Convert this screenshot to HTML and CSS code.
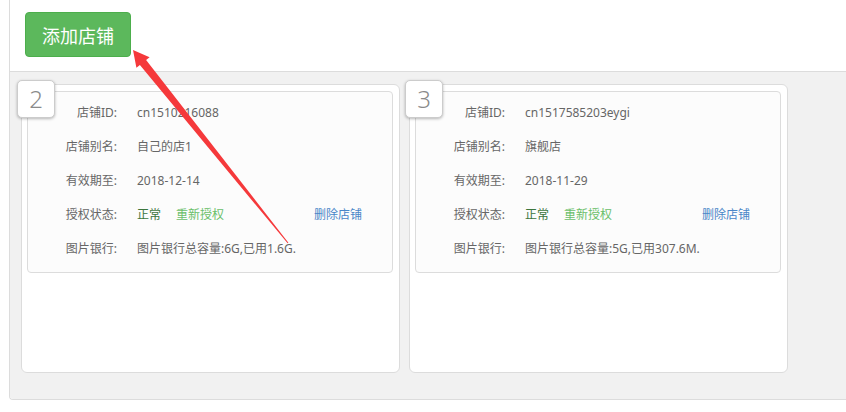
FILE: index.html
```html
<!DOCTYPE html>
<html lang="zh-CN">
<head>
<meta charset="utf-8">
<title>店铺管理</title>
<link rel="stylesheet" href="styles.css">
</head>
<body>
<div class="page">
  <div class="header">
    <button class="btn-add">添加店铺</button>
  </div>
  <div class="shops">
    <div class="card">
      <div class="badge">2</div>
      <div class="info">
        <div class="row"><span class="label">店铺ID:</span><span class="value">cn1510216088</span></div>
        <div class="row"><span class="label">店铺别名:</span><span class="value">自己的店1</span></div>
        <div class="row"><span class="label">有效期至:</span><span class="value">2018-12-14</span></div>
        <div class="row"><span class="label">授权状态:</span><span class="value ok">正常</span><a class="reauth">重新授权</a><a class="del">删除店铺</a></div>
        <div class="row"><span class="label">图片银行:</span><span class="value">图片银行总容量:6G,已用1.6G.</span></div>
      </div>
    </div>
    <div class="card">
      <div class="badge">3</div>
      <div class="info">
        <div class="row"><span class="label">店铺ID:</span><span class="value">cn1517585203eygi</span></div>
        <div class="row"><span class="label">店铺别名:</span><span class="value">旗舰店</span></div>
        <div class="row"><span class="label">有效期至:</span><span class="value">2018-11-29</span></div>
        <div class="row"><span class="label">授权状态:</span><span class="value ok">正常</span><a class="reauth">重新授权</a><a class="del">删除店铺</a></div>
        <div class="row"><span class="label">图片银行:</span><span class="value">图片银行总容量:5G,已用307.6M.</span></div>
      </div>
    </div>
  </div>
</div>
<svg class="arrow" width="846" height="412" viewBox="0 0 846 412">
  <polygon points="133,50 149.6,57.2 146.1,60 288.4,242.7 287.6,243.3 139.9,65 136.4,67.8" fill="#f5393b"/>
</svg>
</body>
</html>
```

FILE: styles.css
```css
html, body {
  margin: 0;
  padding: 0;
  background: #fff;
}
body {
  font-family: "Noto Sans", "Noto Sans CJK SC", sans-serif;
  font-size: 12px;
  color: #666;
  position: relative;
  width: 846px;
  height: 412px;
  overflow: hidden;
}
.page {
  margin-left: 9px;
  border-left: 1px solid #dcdcdc;
  border-bottom: 1px solid #dcdcdc;
  border-bottom-left-radius: 4px;
  overflow: hidden;
}
.header {
  height: 72px;
  box-sizing: border-box;
  padding: 12px 0 0 15px;
  border-bottom: 1px solid #dcdcdc;
  background: #fff;
}
.btn-add {
  width: 106px;
  height: 45px;
  background: #5cb85c;
  border: 1px solid #4cae4c;
  border-radius: 4px;
  color: #fff;
  font-family: "Noto Sans CJK SC", sans-serif;
  font-size: 18px;
  padding: 0;
  margin: 0;
}
.shops {
  background: #f1f1f1;
  padding: 12px 0 26px 11px;
  display: flex;
  gap: 9px;
}
.card {
  position: relative;
  width: 379px;
  height: 289px;
  box-sizing: border-box;
  background: #fff;
  border: 1px solid #dcdcdc;
  border-radius: 6px;
  padding: 6px 6px 0 5px;
}
.badge {
  position: absolute;
  top: -5px;
  left: -5px;
  width: 38px;
  height: 38px;
  box-sizing: border-box;
  background: #fff;
  border: 1px solid #ccc;
  border-radius: 5px;
  box-shadow: 0 1px 3px rgba(0,0,0,0.28);
  color: #8a8a8a;
  font-size: 24px;
  font-weight: 300;
  line-height: 36px;
  text-align: center;
}
.info {
  background: #fcfcfc;
  border: 1px solid #dcdcdc;
  border-radius: 4px;
  padding: 3px 0 7px 0;
}
.row {
  display: flex;
  align-items: center;
  height: 34px;
  white-space: nowrap;
}
.label {
  width: 89px;
  text-align: right;
  color: #666;
}
.value {
  margin-left: 20px;
  color: #666;
}
.value.ok {
  color: #3c763d;
}
.reauth {
  margin-left: 15px;
  color: #6abf6a;
}
.del {
  margin-left: auto;
  margin-right: 30px;
  color: #4a86c8;
}
.arrow {
  position: absolute;
  left: 0;
  top: 0;
  pointer-events: none;
}
```
